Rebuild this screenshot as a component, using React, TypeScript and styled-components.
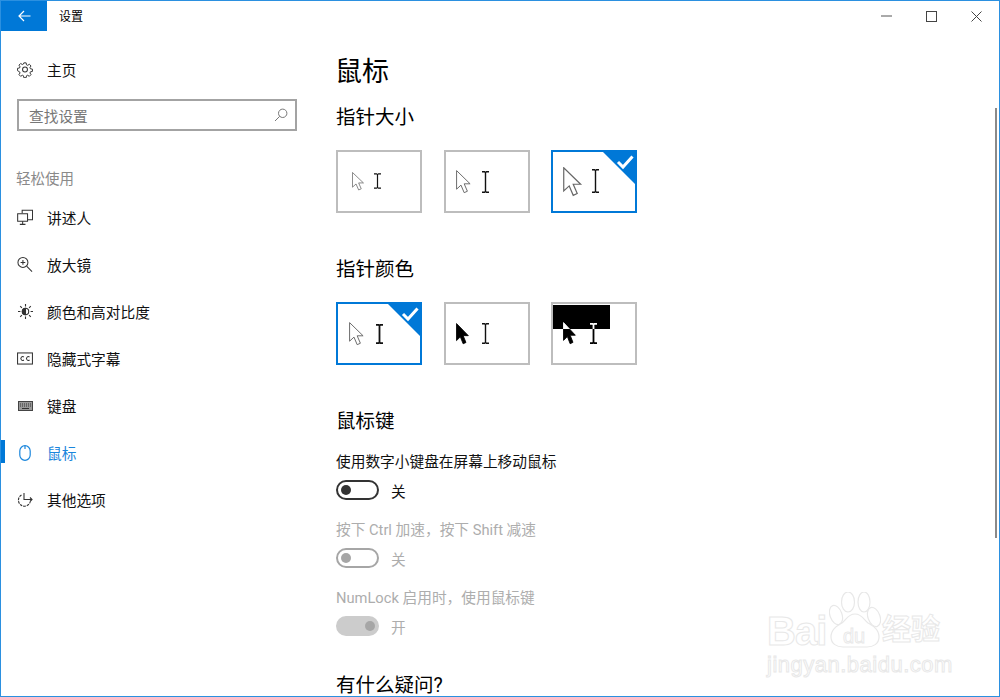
import React from "react";
import styled, { createGlobalStyle } from "styled-components";

const BLUE = "#0078d7";
const FONT = `Roboto, "Noto Sans CJK SC", "Noto Sans", sans-serif`;

const GlobalStyle = createGlobalStyle`
  html, body {
    margin: 0;
    padding: 0;
    background: #fff;
  }
  body {
    font-family: ${FONT};
    color: #000;
  }
`;

const Window = styled.div`
  position: relative;
  width: 1000px;
  height: 697px;
  box-sizing: border-box;
  border: 1px solid #2b90e0;
  overflow: hidden;
  display: flex;
  flex-direction: column;
  background: #fff;
`;

const TitleBar = styled.div`
  height: 30px;
  flex: none;
  display: flex;
  align-items: center;
`;

const BackButton = styled.div`
  width: 46px;
  height: 30px;
  background: ${BLUE};
  display: flex;
  align-items: center;
  justify-content: center;
  color: #fff;
`;

const TitleText = styled.div`
  margin-left: 12px;
  padding-bottom: 2px;
  font-size: 12px;
  flex: 1;
`;

const WinButton = styled.div`
  width: 45px;
  height: 30px;
  display: flex;
  align-items: center;
  justify-content: center;
`;

const Body = styled.div`
  flex: 1;
  display: flex;
  min-height: 0;
`;

const Sidebar = styled.nav`
  width: 335px;
  flex: none;
  padding-top: 15px;
`;

const NavRow = styled.div<{ $active?: boolean }>`
  position: relative;
  height: 47px;
  display: flex;
  align-items: center;
  padding-left: 16px;
  font-size: 14.7px;
  color: ${(p) => (p.$active ? "#1a86dc" : "#111")};
`;

const ActiveMark = styled.span`
  position: absolute;
  left: 0;
  top: 11px;
  width: 4px;
  height: 23px;
  background: ${BLUE};
`;

const NavIcon = styled.span`
  width: 16px;
  height: 16px;
  margin-right: 14px;
  display: flex;
  align-items: center;
  justify-content: center;
`;

const SearchBox = styled.div`
  box-sizing: border-box;
  margin: 6px 0 0 16px;
  width: 280px;
  height: 32px;
  border: 2px solid #a3a3a3;
  display: flex;
  align-items: center;
  justify-content: space-between;
  padding: 0 7px 0 10px;
  font-size: 14.7px;
  color: #777;
`;

const SectionLabel = styled.div`
  margin: 36px 0 1px 15px;
  font-size: 14.5px;
  line-height: 26px;
  color: #8a8a8a;
`;

const Main = styled.main`
  flex: 1;
  padding-top: 18px;
`;

const PageTitle = styled.h1`
  margin: 0 0 8px -1px;
  font-size: 27px;
  font-weight: 400;
  line-height: 46px;
`;

const SectionTitle = styled.h2`
  margin: 0;
  font-size: 19.5px;
  font-weight: 400;
  line-height: 30px;
`;

const LastTitle = styled(SectionTitle)`
  margin-top: 33px;
`;

const CardRow = styled.div`
  display: flex;
  gap: 21.5px;
  margin: 17px 0 42px;
`;

const Card = styled.div<{ $selected?: boolean }>`
  position: relative;
  box-sizing: border-box;
  width: 86px;
  height: 63px;
  background: #fff;
  border: 2px solid ${(p) => (p.$selected ? BLUE : "#bdbdbd")};
  overflow: hidden;
  isolation: isolate;
`;

const Corner = styled.svg`
  position: absolute;
  top: -2px;
  right: -2px;
`;

const Cursor = styled.svg<{ $inverted?: boolean }>`
  position: absolute;
  mix-blend-mode: ${(p) => (p.$inverted ? "difference" : "normal")};
`;

const BlackBar = styled.div`
  position: absolute;
  left: 0;
  top: 1px;
  width: 57px;
  height: 24px;
  background: #000;
`;

const SettingLabel = styled.div<{ $disabled?: boolean }>`
  font-size: 14.7px;
  line-height: 22px;
  color: ${(p) => (p.$disabled ? "#adadad" : "#111")};
`;

const FirstLabel = styled(SettingLabel)`
  margin-top: 14px;
`;

const ToggleRow = styled.div`
  display: flex;
  align-items: center;
  margin: 5px 0 17px;
  height: 24px;
`;

type ToggleState = "off" | "offDisabled" | "onDisabled";

const trackBorder: Record<ToggleState, string> = {
  off: "#333",
  offDisabled: "#a6a6a6",
  onDisabled: "#cccccc",
};

const Track = styled.span<{ $state: ToggleState }>`
  position: relative;
  box-sizing: border-box;
  width: 43px;
  height: 20px;
  border-radius: 10px;
  border: 2px solid ${(p) => trackBorder[p.$state]};
  background: ${(p) => (p.$state === "onDisabled" ? "#cccccc" : "#fff")};
`;

const Knob = styled.span<{ $state: ToggleState }>`
  position: absolute;
  top: 3px;
  left: ${(p) => (p.$state === "onDisabled" ? "27px" : "3px")};
  width: 10px;
  height: 10px;
  border-radius: 50%;
  background: ${(p) => (p.$state === "off" ? "#333" : "#a6a6a6")};
`;

const ToggleText = styled.span<{ $disabled?: boolean }>`
  margin-left: 12px;
  font-size: 14.7px;
  color: ${(p) => (p.$disabled ? "#adadad" : "#111")};
`;

const ScrollThumb = styled.div`
  position: absolute;
  top: 107px;
  right: 2px;
  width: 2px;
  height: 430px;
  background: #8a8a8a;
`;

const Watermark = styled.div`
  position: absolute;
  left: 765px;
  top: 587px;
  width: 200px;
  height: 90px;
  color: #fff;
  -webkit-text-stroke: 1px #e8e8e8;
  font-family: "Liberation Sans", sans-serif;
`;

const MarkBrand = styled.span`
  position: absolute;
  left: 1px;
  top: 20px;
  font-size: 40px;
  font-weight: 700;
  line-height: 46px;
  letter-spacing: -1px;
`;

const MarkCn = styled.span`
  position: absolute;
  left: 116px;
  top: 19px;
  font-family: "Noto Sans CJK SC", sans-serif;
  font-size: 29px;
  font-weight: 700;
  line-height: 40px;
`;

const MarkUrl = styled.span`
  position: absolute;
  left: 1px;
  top: 65px;
  font-size: 22px;
  line-height: 24px;
  white-space: nowrap;
  letter-spacing: 0.5px;
`;

const MarkPaw = styled.svg`
  position: absolute;
  left: 63px;
  top: 4px;
`;

const lineIcon = {
  fill: "none",
  stroke: "#333",
  strokeWidth: 1.1,
} as const;

const GearIcon = () => (
  <svg width="17" height="17" viewBox="0 0 17 17" {...lineIcon}>
    <circle cx="8.5" cy="8.5" r="2.6" />
    <path d="M7.2 1h2.6l.4 2.2 1.3.6 1.9-1.2 1.9 1.9-1.2 1.9.6 1.3 2.2.4v2.6l-2.2.4-.6 1.3 1.2 1.9-1.9 1.9-1.9-1.2-1.3.6-.4 2.2H7.2l-.4-2.2-1.3-.6-1.9 1.2-1.9-1.9 1.2-1.9-.6-1.3L0 9.8V7.2l2.3-.4.6-1.3-1.2-1.9 1.9-1.9 1.9 1.2 1.3-.6z" transform="translate(.5 .5) scale(.94)" />
  </svg>
);

const SearchIcon = () => (
  <svg width="14" height="14" viewBox="0 0 14 14" fill="none" stroke="#777" strokeWidth="1">
    <circle cx="8.7" cy="5.3" r="4.2" />
    <path d="M5.7 8.3 1 13" />
  </svg>
);

const NarratorIcon = () => (
  <svg width="17" height="17" viewBox="0 0 17 17" {...lineIcon}>
    <path d="M5.5 4V.8h11v10h-5" />
    <path d="M.7 4.5h10.5v8H.7z" />
    <path d="M6 12.5v3M3 15.8h6" />
  </svg>
);

const MagnifierIcon = () => (
  <svg width="17" height="17" viewBox="0 0 17 17" {...lineIcon}>
    <circle cx="6.3" cy="6.3" r="5.3" />
    <path d="M10.2 10.2 16 16M6.3 3.8v5M3.8 6.3h5" />
  </svg>
);

const BrightnessIcon = () => (
  <svg width="15" height="15" viewBox="0 0 15 15" {...lineIcon}>
    <circle cx="7.5" cy="7.5" r="3.2" />
    <path d="M7.5 4.3a3.2 3.2 0 0 0 0 6.4z" fill="#333" />
    <path d="M7.5 0v2.4M7.5 12.6V15M0 7.5h2.4M12.6 7.5H15M2.2 2.2 3.9 3.9M11.1 11.1l1.7 1.7M2.2 12.8l1.7-1.7M11.1 3.9l1.7-1.7" />
  </svg>
);

const CaptionIcon = () => (
  <svg width="17" height="13" viewBox="0 0 17 13" {...lineIcon}>
    <rect x=".6" y=".6" width="15.8" height="11.8" />
    <path d="M7.3 4.9a2 2 0 1 0 0 3.2M13.3 4.9a2 2 0 1 0 0 3.2" />
  </svg>
);

const KeyboardIcon = () => (
  <svg width="15" height="10" viewBox="0 0 15 10" fill="none" stroke="#444">
    <rect x=".5" y=".5" width="14" height="9" fill="#999" />
    <path d="M2 3h11M2 5h11" strokeDasharray="1 1" stroke="#333" />
    <path d="M4 7.5h7" stroke="#333" />
  </svg>
);

const MouseIcon = () => (
  <svg width="12" height="16" viewBox="0 0 12 16" fill="none" stroke="#1a86dc" strokeWidth="1.2">
    <rect x=".8" y=".7" width="10.4" height="14.6" rx="5.2" />
    <path d="M6 1v3" />
  </svg>
);

const OtherIcon = () => (
  <svg width="16" height="15" viewBox="0 0 16 15" {...lineIcon}>
    <path d="M4.5 3a6 6 0 1 0 8.8 6.5" strokeDasharray="2.6 1" />
    <path d="M7 1v6.5h8M13 5.5l2 2-2 2" />
  </svg>
);

const ARROW = "M0 0v15.5l3.7-3.4 2.7 6.3 2.7-1.2-2.7-6.2 5 0z";

// arrow cursor, drawn in a 13.5x20 box then scaled
const ArrowCursor = ({
  left,
  top,
  size,
  height,
  fill = "#fff",
  stroke = "#666",
  inverted,
}: {
  left: number;
  top: number;
  size: number;
  height: number;
  fill?: string;
  stroke?: string;
  inverted?: boolean;
}) => (
  <Cursor
    $inverted={inverted}
    style={{ left, top }}
    width={size}
    height={height}
    viewBox="-0.5 -0.5 13.5 20"
    preserveAspectRatio="none"
  >
    <path d={ARROW} fill={fill} stroke={stroke} strokeWidth="0.8" />
  </Cursor>
);

const BeamCursor = ({
  left,
  top,
  height,
  color = "#111",
  weight = 1.4,
  inverted,
}: {
  left: number;
  top: number;
  height: number;
  color?: string;
  weight?: number;
  inverted?: boolean;
}) => (
  <Cursor
    $inverted={inverted}
    style={{ left, top }}
    width="9"
    height={height}
    viewBox={`0 0 9 ${height}`}
    fill="none"
    stroke={color}
    strokeWidth={weight}
  >
    <path d={`M4.5 1.5V${height - 1.5}M1 .8h2.5l1 .8 1-.8H8M1 ${height - 0.8}h2.5l1-.8 1 .8H8`} />
  </Cursor>
);

const CheckCorner = () => (
  <Corner width="36" height="36" viewBox="0 0 36 36">
    <path d="M0 0h36v36z" fill={BLUE} />
    <path d="M17 12l5 5 9.5-10.5" fill="none" stroke="#fff" strokeWidth="3" />
  </Corner>
);

const navItems = [
  { label: "讲述人", icon: <NarratorIcon /> },
  { label: "放大镜", icon: <MagnifierIcon /> },
  { label: "颜色和高对比度", icon: <BrightnessIcon /> },
  { label: "隐藏式字幕", icon: <CaptionIcon /> },
  { label: "键盘", icon: <KeyboardIcon /> },
  { label: "鼠标", icon: <MouseIcon />, active: true },
  { label: "其他选项", icon: <OtherIcon /> },
];

const App = () => {
  return (
    <>
      <GlobalStyle />
      <Window>
        <TitleBar>
          <BackButton>
            <svg width="13" height="12" viewBox="0 0 13 12" fill="none" stroke="#fff" strokeWidth="1.2">
              <path d="M12.5 6H1M6 1 1 6l5 5" />
            </svg>
          </BackButton>
          <TitleText>设置</TitleText>
          <WinButton>
            <svg width="11" height="2" viewBox="0 0 11 2">
              <path d="M0 1h11" stroke="#555" strokeWidth="1" />
            </svg>
          </WinButton>
          <WinButton>
            <svg width="11" height="11" viewBox="0 0 11 11" fill="none" stroke="#444">
              <rect x=".5" y=".5" width="10" height="10" />
            </svg>
          </WinButton>
          <WinButton>
            <svg width="11" height="11" viewBox="0 0 11 11" fill="none" stroke="#444">
              <path d="M.5.5l10 10M10.5.5l-10 10" />
            </svg>
          </WinButton>
        </TitleBar>
        <Body>
          <Sidebar>
            <NavRow>
              <NavIcon>
                <GearIcon />
              </NavIcon>
              主页
            </NavRow>
            <SearchBox>
              查找设置
              <SearchIcon />
            </SearchBox>
            <SectionLabel>轻松使用</SectionLabel>
            {navItems.map((item) => (
              <NavRow key={item.label} $active={item.active}>
                {item.active && <ActiveMark />}
                <NavIcon>{item.icon}</NavIcon>
                {item.label}
              </NavRow>
            ))}
          </Sidebar>
          <Main>
            <PageTitle>鼠标</PageTitle>
            <SectionTitle>指针大小</SectionTitle>
            <CardRow>
              <Card>
                <ArrowCursor left={14} top={20} size={13} height={19} />
                <BeamCursor left={35} top={21} height={16} weight={1.2} />
              </Card>
              <Card>
                <ArrowCursor left={10} top={18} size={16} height={24} />
                <BeamCursor left={35.5} top={19} height={22} />
              </Card>
              <Card $selected>
                <CheckCorner />
                <ArrowCursor left={10} top={15} size={20} height={30} />
                <BeamCursor left={37.5} top={17} height={24} />
              </Card>
            </CardRow>
            <SectionTitle>指针颜色</SectionTitle>
            <CardRow>
              <Card $selected>
                <CheckCorner />
                <ArrowCursor left={11} top={18} size={16} height={24} />
                <BeamCursor left={36.5} top={20} height={20} weight={1.8} />
              </Card>
              <Card>
                <ArrowCursor left={10.5} top={19} size={14} height={22} fill="#000" stroke="#000" />
                <BeamCursor left={35.5} top={19} height={21} />
              </Card>
              <Card>
                <BlackBar />
                <ArrowCursor left={10} top={18} size={14} height={23} fill="#fff" stroke="#fff" inverted />
                <BeamCursor left={35.5} top={19} height={21} color="#fff" weight={1.8} inverted />
              </Card>
            </CardRow>
            <SectionTitle>鼠标键</SectionTitle>
            <FirstLabel>使用数字小键盘在屏幕上移动鼠标</FirstLabel>
            <ToggleRow>
              <Track $state="off">
                <Knob $state="off" />
              </Track>
              <ToggleText>关</ToggleText>
            </ToggleRow>
            <SettingLabel $disabled>按下 Ctrl 加速，按下 Shift 减速</SettingLabel>
            <ToggleRow>
              <Track $state="offDisabled">
                <Knob $state="offDisabled" />
              </Track>
              <ToggleText $disabled>关</ToggleText>
            </ToggleRow>
            <SettingLabel $disabled>NumLock 启用时，使用鼠标键</SettingLabel>
            <ToggleRow>
              <Track $state="onDisabled">
                <Knob $state="onDisabled" />
              </Track>
              <ToggleText $disabled>开</ToggleText>
            </ToggleRow>
            <LastTitle>有什么疑问?</LastTitle>
          </Main>
        </Body>
        <ScrollThumb />
        <Watermark>
          <MarkBrand>Bai</MarkBrand>
          <MarkPaw width="52" height="56" viewBox="0 0 52 56" fill="#fff" stroke="#e8e8e8" strokeWidth="1.2">
            <ellipse cx="7" cy="23" rx="6" ry="10" transform="rotate(-20 7 23)" />
            <ellipse cx="19" cy="10" rx="6.5" ry="10" />
            <ellipse cx="35" cy="10" rx="6" ry="10" />
            <ellipse cx="45" cy="25" rx="6" ry="10" transform="rotate(-20 45 25)" />
            <path d="M26 22c-7 0-9 6-13 9-5 3-11 6-11 14 0 7 6 10 12 10h24c6 0 12-3 12-10 0-8-6-11-11-14-4-3-6-9-13-9z" />
            <text x="14" y="51" fontSize="20" fill="#fff" strokeWidth="0.9" fontFamily="Liberation Sans">du</text>
          </MarkPaw>
          <MarkCn>经验</MarkCn>
          <MarkUrl>jingyan.baidu.com</MarkUrl>
        </Watermark>
      </Window>
    </>
  );
};

export default App;
